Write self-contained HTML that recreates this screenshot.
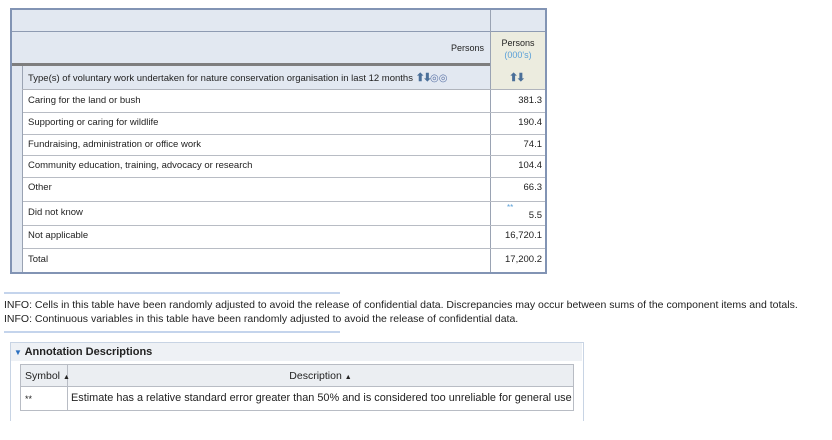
<!DOCTYPE html>
<html><head><style>
body{margin:0;background:#fff;font-family:"Liberation Sans",Arial,sans-serif;font-size:9.5px;color:#222;}
.abs{position:absolute}
#t{left:10px;top:8px;width:533px;height:262px;border:2px solid #8294b4;background:#fff}
.hd{background:#e2e8f1}
.hl{height:1px;background:#b8bcc4}
.row{position:absolute;left:11px;width:467px;padding-left:5px;line-height:22px}
.val{position:absolute;left:480px;width:50px;text-align:right;line-height:22px}
.ar{color:#4a6f99;font-weight:bold;font-size:11px;letter-spacing:-2px}
</style></head><body>
<div class="abs" id="t">
 <div class="abs hd" style="left:0;top:0;width:533px;height:54px"></div>
 <div class="abs" style="left:0;top:21px;width:533px;height:1px;background:#8e9bb2"></div>
 <div class="abs" style="left:0;top:53px;width:478px;height:3px;background:#7e7e7e"></div>
 <div class="abs hd" style="left:0;top:56px;width:478px;height:23px"></div>
 <div class="abs hd" style="left:0;top:56px;width:10px;height:206px"></div>
 <div class="abs" style="left:10px;top:56px;width:1px;height:206px;background:#9aa3b3"></div>
 <div class="abs" style="left:478px;top:0;width:1px;height:262px;background:#9aa3b3"></div>
 <div class="abs" style="left:479px;top:22px;width:54px;height:57px;background:#ececdf"></div>
 <div class="abs" style="left:400px;top:33px;width:72px;text-align:right;font-size:9px">Persons</div>
 <div class="abs" style="left:479px;top:27px;width:54px;text-align:center;font-size:9px;line-height:12px">Persons<br><span style="color:#5aa0d8">(000's)</span></div>
 <div class="abs" style="left:16px;top:61px;font-size:9.5px">Type(s) of voluntary work undertaken for nature conservation organisation in last 12 months <span class="ar">⬆⬇</span><span style="color:#5d75a8;font-size:10px">◎◎</span></div>
 <div class="abs ar" style="left:497px;top:61px">⬆⬇</div>
 <div class="abs" style="left:10px;top:79px;width:523px;height:1px;background:#b0b4bc"></div>

 <div class="row" style="top:80px">Caring for the land or bush</div><div class="val" style="top:80px">381.3</div>
 <div class="abs hl" style="left:11px;top:102px;width:522px"></div>
 <div class="row" style="top:102px">Supporting or caring for wildlife</div><div class="val" style="top:102px">190.4</div>
 <div class="abs hl" style="left:11px;top:124px;width:522px"></div>
 <div class="row" style="top:124px">Fundraising, administration or office work</div><div class="val" style="top:124px">74.1</div>
 <div class="abs hl" style="left:11px;top:145px;width:522px"></div>
 <div class="row" style="top:145px">Community education, training, advocacy or research</div><div class="val" style="top:145px">104.4</div>
 <div class="abs hl" style="left:11px;top:167px;width:522px"></div>
 <div class="row" style="top:167px">Other</div><div class="val" style="top:167px">66.3</div>
 <div class="abs hl" style="left:11px;top:191px;width:522px"></div>
 <div class="row" style="top:192px">Did not know</div><div class="val" style="top:195px">5.5</div>
 <div class="abs" style="left:495px;top:193px;color:#5aa0d8;font-size:8px">**</div>
 <div class="abs hl" style="left:11px;top:215px;width:522px"></div>
 <div class="row" style="top:215px">Not applicable</div><div class="val" style="top:215px">16,720.1</div>
 <div class="abs hl" style="left:11px;top:238px;width:522px"></div>
 <div class="row" style="top:239px">Total</div><div class="val" style="top:239px">17,200.2</div>
</div>
<div class="abs" style="left:4px;top:292px;width:336px;height:2px;background:#c4d4ec"></div>
<div class="abs" style="left:4px;top:298px;font-size:10.5px;line-height:14px;color:#222">INFO: Cells in this table have been randomly adjusted to avoid the release of confidential data. Discrepancies may occur between sums of the component items and totals.<br>INFO: Continuous variables in this table have been randomly adjusted to avoid the release of confidential data.</div>
<div class="abs" style="left:4px;top:331px;width:336px;height:2px;background:#c4d4ec"></div>
<div class="abs" style="left:10px;top:342px;width:572px;height:78px;border:1px solid #c8d4e4;border-bottom:none;background:#fff"></div>
<div class="abs" style="left:11px;top:343px;width:571px;height:18px;background:#eef1f5"></div>
<div class="abs" style="left:14px;top:346px;font-size:11px;font-weight:bold;color:#222"><span style="color:#2a6fc0;font-size:8px">▼</span> Annotation Descriptions</div>
<div class="abs" style="left:20px;top:364px;width:552px;height:45px;border:1px solid #b8bcc4"></div>
<div class="abs" style="left:21px;top:365px;width:552px;height:21px;background:#ebeef2;border-bottom:1px solid #b8bcc4"></div>
<div class="abs" style="left:67px;top:365px;width:1px;height:45px;background:#b8bcc4"></div>
<div class="abs" style="left:25px;top:370px;font-size:10.5px">Symbol <span style="font-size:7px">▲</span></div>
<div class="abs" style="left:68px;top:370px;width:505px;text-align:center;font-size:10.5px">Description <span style="font-size:7px">▲</span></div>
<div class="abs" style="left:25px;top:394px;font-size:9px">**</div>
<div class="abs" style="left:71px;top:392px;font-size:10.9px">Estimate has a relative standard error greater than 50% and is considered too unreliable for general use</div>
</body></html>
